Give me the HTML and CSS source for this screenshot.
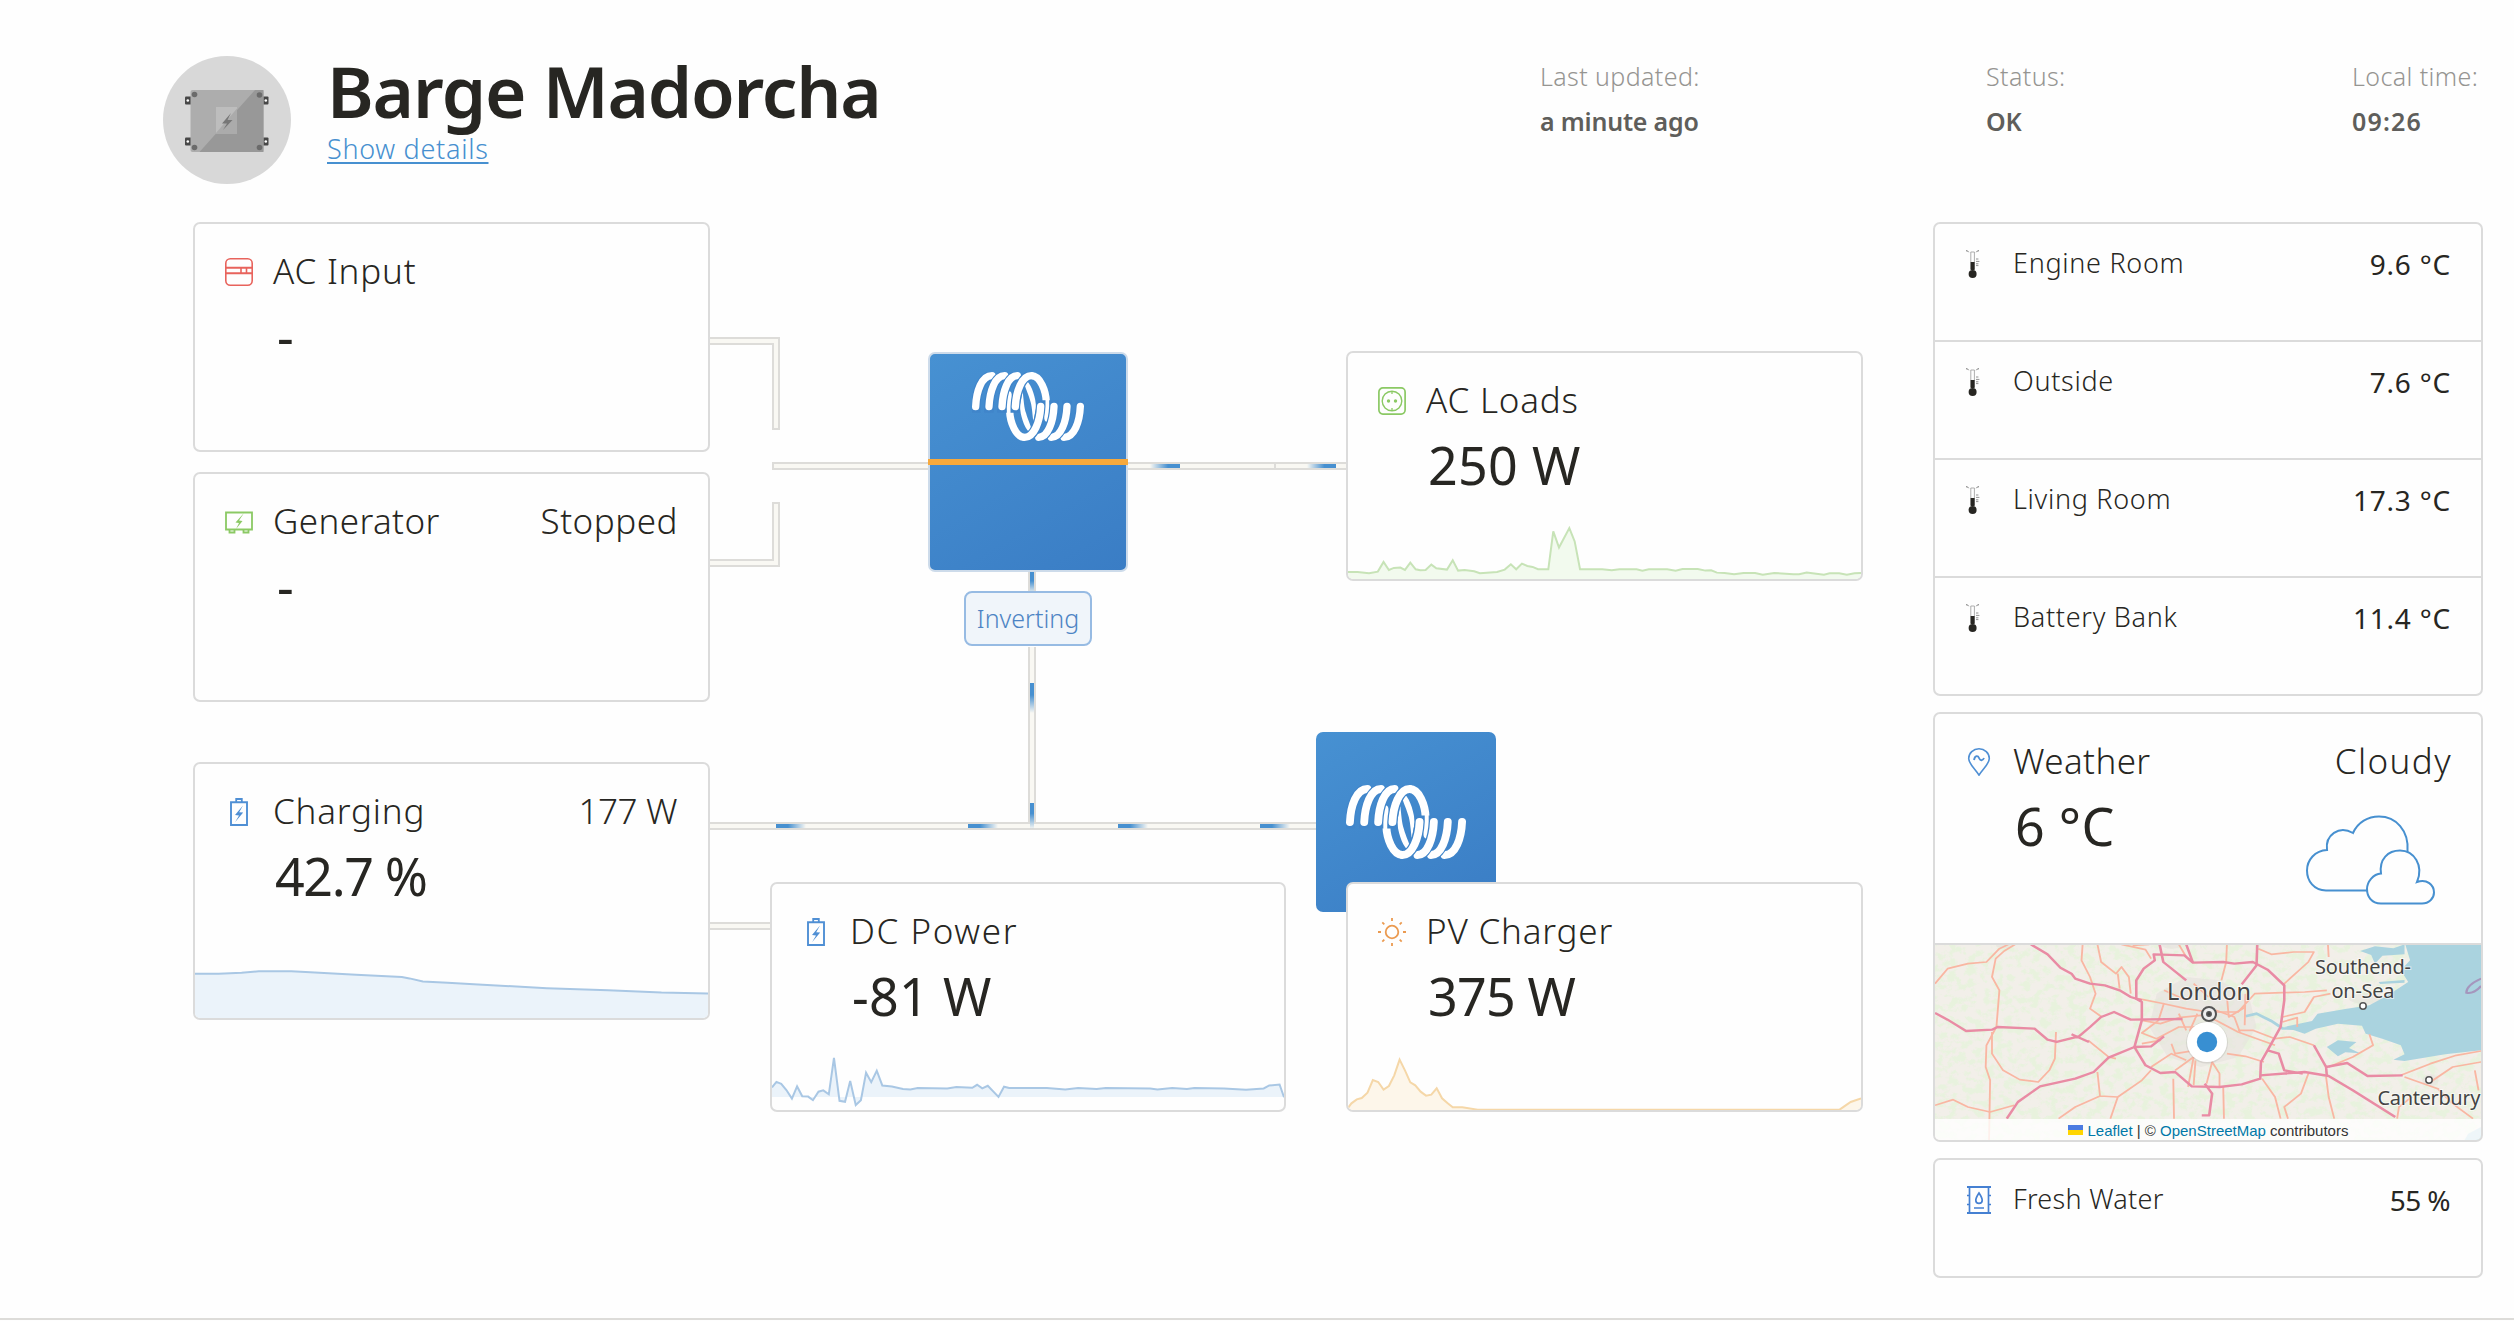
FILE: index.html
```
<!DOCTYPE html>
<html lang="en">

<head>
    <meta charset="utf-8">
    <title>Barge Madorcha</title>
    <link rel="stylesheet" href="styles.css">
</head>

<body>
    <!-- shared icons -->
    <svg class="sprite">
        <symbol id="logo" viewBox="0 0 336 207">
            <g fill="none" stroke-linecap="round">
                <path class="coil" d="M158 196 C131 196 114 150 113 116 C113 96 110 84 108 68"/>
                <path class="coil" d="M178 11 C205 11 222 57 223 91 C223 111 226 123 228 139"/>
                <path class="coil-back" d="M164 26 C181 40 191 82 193 104 Q189 122 184 148 C181 126 180 100 174 84 C168 62 158 44 158 36Z"/>
                <path class="coil-back" d="M172 181 C155 167 145 125 143 103 Q147 85 152 59 C155 81 156 107 162 123 C168 145 178 163 178 171Z"/>
                <path class="coil-gap" d="M11 122 V104 C13 58 29 11 62 11"/>
                <path class="coil" d="M11 104 C13 58 29 11 60 11"/>
                <path class="coil-gap" d="M51 122 V104 C53 58 69 11 100 11"/>
                <path class="coil" d="M51 104 C53 58 69 11 98 11"/>
                <path class="coil-gap" d="M90 122 V104 C92 58 108 11 138 11"/>
                <path class="coil" d="M90 104 C92 58 108 11 136 11"/>
                <path class="coil-gap" d="M130 122 V104 C132 58 150 11 178 11"/>
                <path class="coil" d="M130 104 C132 58 150 11 178 11"/>
                <path class="coil-gap" d="M325 85 V103 C323 149 307 196 274 196"/>
                <path class="coil" d="M325 103 C323 149 307 196 276 196"/>
                <path class="coil-gap" d="M285 85 V103 C283 149 267 196 236 196"/>
                <path class="coil" d="M285 103 C283 149 267 196 238 196"/>
                <path class="coil-gap" d="M246 85 V103 C244 149 228 196 198 196"/>
                <path class="coil" d="M246 103 C244 149 228 196 200 196"/>
                <path class="coil-gap" d="M206 85 V103 C204 149 186 196 158 196"/>
                <path class="coil" d="M206 103 C204 149 186 196 158 196"/>
            </g>
        </symbol>
        <symbol id="battery" viewBox="0 0 28 28">
            <path d="M6 4.2h16v22.8H6z" fill="none" stroke="currentColor" stroke-width="1.9"/>
            <path d="M11.2 4V1h5.6v3" fill="none" stroke="currentColor" stroke-width="1.8"/>
            <path d="M18 7.5l-8 9.6 4 .3-3.8 6.6 8-9.4-4-.4z" fill="currentColor"/>
        </symbol>
        <symbol id="thermo" viewBox="0 0 28 28">
            <path d="M5.8 2V19h3.6V2z" fill="#fff" stroke="#999" stroke-width=".8"/>
            <path d="M5.6 12h4v8h-4z" fill="#272622"/>
            <circle cx="7.6" cy="24" r="4" fill="#272622"/>
            <path d="M1 .8h1.4l1.2 1.4M14 .8h-1.4l-1.2 1.4" fill="none" stroke="#555" stroke-width=".8"/>
            <path d="M11 9h2.4M11 11.4h3.4M11 13.8h2.4M11 15.6h2.4" stroke="#777" stroke-width=".8"/>
        </symbol>
    </svg>

    <header class="header">
        <svg class="avatar" viewBox="0 0 128 128">
            <circle cx="64" cy="64" r="64" fill="#d8d8d8"/>
            <g fill="#474747">
                <rect x="22" y="40.5" width="7" height="8" rx="1"/>
                <rect x="22" y="81.5" width="7" height="8" rx="1"/>
                <rect x="98.5" y="40.5" width="7" height="8" rx="1"/>
                <rect x="98.5" y="81.5" width="7" height="8" rx="1"/>
            </g>
            <g fill="#fff">
                <circle cx="24.8" cy="44.5" r="1.3"/>
                <circle cx="24.8" cy="85.5" r="1.3"/>
                <circle cx="102.8" cy="44.5" r="1.3"/>
                <circle cx="102.8" cy="85.5" r="1.3"/>
            </g>
            <rect x="27.5" y="34" width="73" height="62" rx="2" fill="#adadad"/>
            <path d="M92 34h8.500v62H36.500z" fill="#989898"/>
            <rect x="53" y="51" width="21" height="27" fill="#bdbdbd"/>
            <path d="M74 52.500V78H53v-1z" fill="#ababab"/>
            <path d="M68 57l-9 10.500h5L60 74l9.500-10h-5z" fill="#777"/>
            <g fill="#6b6b6b">
                <circle cx="31.500" cy="38.500" r="2.800"/>
                <circle cx="96.500" cy="39" r="2.800"/>
                <circle cx="31.500" cy="91.500" r="2.800"/>
                <circle cx="96.500" cy="91.500" r="2.800"/>
            </g>
        </svg>
        <div class="title">
            <h1>Barge Madorcha</h1>
            <a href="#">Show details</a>
        </div>
        <dl class="stats">
            <div class="stat">
                <dt>Last updated:</dt>
                <dd>a minute ago</dd>
            </div>
            <div class="stat">
                <dt>Status:</dt>
                <dd>OK</dd>
            </div>
            <div class="stat">
                <dt>Local time:</dt>
                <dd class="clock">09:26</dd>
            </div>
        </dl>
    </header>

    <main class="main">
        <section class="diagram">
            <!-- wires -->
            <svg class="wires" viewBox="0 0 1670 900">
                <defs>
                    <linearGradient id="flow-r">
                        <stop offset="0" stop-color="#4790d0" stop-opacity="0"/>
                        <stop offset=".6" stop-color="#4790d0"/>
                    </linearGradient>
                    <linearGradient id="flow-l" x1="1" x2="0">
                        <stop offset="0" stop-color="#4790d0" stop-opacity="0"/>
                        <stop offset=".6" stop-color="#4790d0"/>
                    </linearGradient>
                    <linearGradient id="flow-u" x1="0" x2="0" y1="1" y2="0">
                        <stop offset="0" stop-color="#4790d0" stop-opacity="0"/>
                        <stop offset=".6" stop-color="#4790d0"/>
                    </linearGradient>
                </defs>
                <g class="wire">
                    <path d="M515 116H586V207H580V122H515"/>
                    <path d="M515 344H586V281H580V338H515"/>
                    <path d="M736 241H580V247H736"/>
                    <path d="M934 241H1155V247H934"/>
                    <path d="M1082 241v6"/>
                    <path d="M515 601H1125V607H515"/>
                    <path d="M515 701H580V707H515"/>
                    <path d="M836 349V370H842V349M836 425V602M842 425V602"/>
                    <path class="inner" d="M839 425V605"/>
                </g>
                <rect x="957" y="242" width="30" height="4" fill="url(#flow-r)"/>
                <rect x="1114" y="242" width="29" height="4" fill="url(#flow-r)"/>
                <rect x="583" y="602" width="30" height="4" fill="url(#flow-l)"/>
                <rect x="775" y="602" width="30" height="4" fill="url(#flow-l)"/>
                <rect x="925" y="602" width="30" height="4" fill="url(#flow-l)"/>
                <rect x="1067" y="602" width="30" height="4" fill="url(#flow-l)"/>
                <rect x="837" y="350" width="4" height="22" fill="url(#flow-u)"/>
                <rect x="837" y="461" width="4" height="30" fill="url(#flow-u)"/>
                <rect x="837" y="581" width="4" height="26" fill="url(#flow-u)"/>
            </svg>

            <article class="card ac-input">
                <div class="card-head">
                    <svg class="icon red" viewBox="0 0 28 28" fill="none" stroke="currentColor" stroke-width="1.6">
                        <rect x=".8" y=".8" width="26.400" height="26.400" rx="4.500"/>
                        <path d="M1 9.700h26M1 15.300h26" stroke-width="2"/>
                        <path d="M16 10v5M21.500 10v5"/>
                    </svg>
                    <h2>AC Input</h2>
                </div>
                <p class="value none">-</p>
            </article>

            <article class="card generator">
                <div class="card-head">
                    <svg class="icon green" viewBox="0 0 28 28" fill="none" stroke="currentColor" stroke-width="1.8">
                        <path d="M1 4.500h26v17H1z"/>
                        <path d="M4.500 22v2.500h5V22M18.500 22v2.500h5V22"/>
                        <path d="M19 5l-8.500 9.500 3.500.5-3 6 6.500-8-3.500-.5z" fill="currentColor" stroke="none"/>
                    </svg>
                    <h2 class="snug">Generator</h2>
                    <span class="state">Stopped</span>
                </div>
                <p class="value none">-</p>
            </article>

            <article class="card charging">
                <div class="card-head">
                    <svg class="icon blue"><use href="#battery"/></svg>
                    <h2>Charging</h2>
                    <span class="state watts">177 W</span>
                </div>
                <p class="value percent">42.7 %</p>
                <svg class="chart blue" viewBox="38 690 1344 146" preserveAspectRatio="none">
                    <path class="area" d="M38 704H100L160 701 205 697H290L340 700 460 707 580 714 600 718 635 727 700 731 780 736 960 747 1120 753 1260 760 1382 763V836H38z"/>
                    <path class="line" d="M38 704H100L160 701 205 697H290L340 700 460 707 580 714 600 718 635 727 700 731 780 736 960 747 1120 753 1260 760 1382 763"/>
                </svg>
            </article>

            <div class="unit inverter">
                <svg class="logo"><use href="#logo"/></svg>
            </div>
            <span class="badge">Inverting</span>

            <article class="card ac-loads">
                <div class="card-head">
                    <svg class="icon green" viewBox="0 0 28 28" fill="none" stroke="currentColor" stroke-width="1.700">
                        <rect x=".9" y=".9" width="26.200" height="26.200" rx="4"/>
                        <circle cx="14" cy="14" r="9.800" stroke-width="1.400"/>
                        <path d="M14 4v3M14 21v3" stroke-width="1.300"/>
                        <circle cx="10.500" cy="14" r="1.700" fill="currentColor" stroke="none"/>
                        <circle cx="17.500" cy="14" r="1.700" fill="currentColor" stroke="none"/>
                    </svg>
                    <h2>AC Loads</h2>
                </div>
                <p class="value">250 W</p>
                <svg class="chart green" viewBox="125 588 1342 161" preserveAspectRatio="none">
                    <path class="area" d="M125 728H150L180 732 203 727 218 698 232 722 245 716 262 715 274 722 288 700 302 720 314 723 328 722 343 706 356 717 384 721 399 693 413 724 430 722 455 726 470 732 515 728 535 721 551 705 565 720 580 703 594 710 608 713 622 720H649L662 607 677 655 704 597 718 637 732 720H790L815 723 835 720H880L895 724 912 720H960L982 724 1000 719H1040L1060 724 1075 723 1090 730 1110 731 1135 735 1160 731H1190L1210 736 1240 731 1290 735 1305 735 1325 730 1350 733 1370 736 1385 732H1410L1430 736 1450 732 1467 731V749H125z"/>
                    <path class="line" d="M125 728H150L180 732 203 727 218 698 232 722 245 716 262 715 274 722 288 700 302 720 314 723 328 722 343 706 356 717 384 721 399 693 413 724 430 722 455 726 470 732 515 728 535 721 551 705 565 720 580 703 594 710 608 713 622 720H649L662 607 677 655 704 597 718 637 732 720H790L815 723 835 720H880L895 724 912 720H960L982 724 1000 719H1040L1060 724 1075 723 1090 730 1110 731 1135 735 1160 731H1190L1210 736 1240 731 1290 735 1305 735 1325 730 1350 733 1370 736 1385 732H1410L1430 736 1450 732 1467 731"/>
                </svg>
            </article>

            <article class="card dc-power">
                <div class="card-head">
                    <svg class="icon blue"><use href="#battery"/></svg>
                    <h2 class="wide">DC Power</h2>
                </div>
                <p class="value">-81 W</p>
                <svg class="chart blue" viewBox="85 586 1388 165" preserveAspectRatio="none">
                    <path class="area" d="M85 682L97 665 110 671 124 690 139 716 153 679 167 709 183 710 196 721 211 695 224 691 239 703 253 592 268 723 283 726 297 662 312 736 326 721 340 637 354 666 369 631 384 676 410 679 440 687 460 688 480 684 560 685 585 681 628 683 641 674 655 685 670 677 699 711 714 680 728 684 830 684 880 688 915 684 965 687 990 684 1110 685 1130 688 1170 684 1210 687 1230 684 1310 685 1370 689 1418 685 1433 676 1461 673 1473 710V711H85z"/>
                    <path class="line" d="M85 682L97 665 110 671 124 690 139 716 153 679 167 709 183 710 196 721 211 695 224 691 239 703 253 592 268 723 283 726 297 662 312 736 326 721 340 637 354 666 369 631 384 676 410 679 440 687 460 688 480 684 560 685 585 681 628 683 641 674 655 685 670 677 699 711 714 680 728 684 830 684 880 688 915 684 965 687 990 684 1110 685 1130 688 1170 684 1210 687 1230 684 1310 685 1370 689 1418 685 1433 676 1461 673 1473 712"/>
                </svg>
            </article>

            <div class="unit solar">
                <svg class="logo"><use href="#logo"/></svg>
            </div>

            <article class="card pv-charger">
                <div class="card-head">
                    <svg class="icon orange" viewBox="0 0 28 28" fill="none" stroke="currentColor" stroke-width="1.800">
                        <circle cx="14" cy="14" r="6.300"/>
                        <path d="M14 0v3M14 25v3M0 14h3M25 14h3M4.300 4.300l2 2M21.700 21.700l2 2M23.700 4.300l-2 2M6.300 21.700l-2 2"/>
                    </svg>
                    <h2>PV Charger</h2>
                </div>
                <p class="value tight">375 W</p>
                <svg class="chart orange" viewBox="151 1040 1342 162" preserveAspectRatio="none">
                    <path class="area" d="M151 1196L160 1182 174 1170 187 1166 202 1150 216 1112 230 1118 244 1141 258 1130 272 1098 286 1051 300 1083 314 1119 327 1128 341 1147 355 1159 369 1156 383 1137 397 1167 411 1181 425 1194 450 1194 490 1201H1437L1452 1189 1466 1178 1493 1167V1202H151z"/>
                    <path class="line" d="M151 1196L160 1182 174 1170 187 1166 202 1150 216 1112 230 1118 244 1141 258 1130 272 1098 286 1051 300 1083 314 1119 327 1128 341 1147 355 1159 369 1156 383 1137 397 1167 411 1181 425 1194 450 1194 490 1201H1437L1452 1189 1466 1178 1493 1167"/>
                </svg>
            </article>
        </section>

        <aside class="sidebar">
            <ul class="panel">
                <li class="row">
                    <svg class="icon"><use href="#thermo"/></svg>
                    <span class="name">Engine Room</span>
                    <span class="reading">9.6 °C</span>
                </li>
                <li class="row">
                    <svg class="icon"><use href="#thermo"/></svg>
                    <span class="name">Outside</span>
                    <span class="reading">7.6 °C</span>
                </li>
                <li class="row">
                    <svg class="icon"><use href="#thermo"/></svg>
                    <span class="name">Living Room</span>
                    <span class="reading">17.3 °C</span>
                </li>
                <li class="row">
                    <svg class="icon"><use href="#thermo"/></svg>
                    <span class="name">Battery Bank</span>
                    <span class="reading">11.4 °C</span>
                </li>
            </ul>

            <div class="panel weather">
                <div class="forecast">
                    <div class="card-head">
                        <svg class="icon blue" viewBox="0 0 28 28" fill="none" stroke="currentColor" stroke-width="1.600">
                            <path d="M14 27.200C11 22 3.700 16 3.700 10.500a10.300 9.700 0 0 1 20.600 0C24.300 16 17 22 14 27.200z"/>
                            <path d="M9 12c1-5 4-4.500 5-2s3.500 3.500 5 0" stroke-width="1.900"/>
                        </svg>
                        <h2 class="snug">Weather</h2>
                        <span class="state sky">Cloudy</span>
                    </div>
                    <div class="weather-now">
                        <p class="value">6 °C</p>
                        <svg class="clouds" viewBox="0 0 130 90" fill="#fefefe" stroke="#4790d0" stroke-width="2">
                            <path d="M62 75.500H20C8 75.500 1 66 1 55.500S9 35.500 21 35C19 20 33 10 47 18 52 7 62 1.500 73 1.500c17 0 30 14 28.500 34.500V75.500z"/>
                            <path d="M75 88.500C65 88.500 61 81 61 74s6-15 14-15.500C73 44 82 35.500 94 35.500c14 0 24 15 17 31.500 10-3.500 17 3 17 10.500 0 6-5 11-12 11z"/>
                        </svg>
                    </div>
                </div>
                <div class="map">
                    <svg class="map-tiles" viewBox="0 0 546 196">
                        <defs>
                            <filter id="terrain" x="0" y="0" width="1" height="1">
                                <feTurbulence type="fractalNoise" baseFrequency=".04 .045" numOctaves="4" seed="7"/>
                                <feColorMatrix values="0 0 0 0 .78  0 0 0 0 .90  0 0 0 0 .70  0 6 0 0 -2.800"/>
                            </filter>
                        </defs>
                        <g transform="scale(.37 .3333) translate(-41 -44)">
                            <path d="M41 42H1517V634H41z" fill="#f2efe9"/>
                            <path d="M41 42H1517V634H41z" filter="url(#terrain)" opacity=".75"/>
                            <g fill="#e6e2de" opacity=".6">
                                <path d="M640 190l80-50 90 10 80 50 20 90-50 90-100 30-90-30-50-90z"/>
                                <ellipse cx="228" cy="46" rx="22" ry="8"/>
                                <ellipse cx="680" cy="45" rx="26" ry="10"/>
                                <ellipse cx="1210" cy="205" rx="50" ry="16"/>
                                <ellipse cx="1380" cy="450" rx="22" ry="18"/>
                            </g>
                            <g fill="#aad3df">
                                <path d="M1312 42H1517V360L1420 372 1310 392 1280 388 1310 372 1300 345 1250 325 1205 310 1195 286 1130 280 1070 295 1040 310 985 290 1060 272 1075 250 1150 236 1215 225 1265 195 1320 155 1300 120 1325 90z"/>
                                <path d="M1190 62l40-14 50 6 30-12v30l-60 4-20 24-10-26z"/>
                                <path d="M1100 350l30-20 50 5-20 18 30 16-40-3-20 12z"/>
                                <path d="M1517 590l-35 20-10 20h45z"/>
                                <path d="M1240 155l70-6v8l-66 4z"/>
                            </g>
                            <path d="M880 258l30-8 40 22 30 22 60 2" fill="none" stroke="#aad3df" stroke-width="8"/>
                            <path d="M1517 145q-40 20-40 42 20 5 40-20" fill="none" stroke="#a596bd" stroke-width="6"/>
                            <g class="road">
                                <path d="M41 160L75 115 130 100 180 95 215 55 240 42M258 42L228 62 205 85 195 140 215 180 207 290 180 345 178 410 190 450 187 630"/>
                                <path d="M195 305L195 370 225 420 270 448 320 455 350 420 365 385 368 305M41 525L90 508 130 530 190 545 255 525"/>
                                <path d="M440 42L437 90 460 140 475 190 460 235 492 260M480 42L490 95 530 130 545 110 565 140 570 190M535 130L540 175"/>
                                <path d="M545 42L610 58 625 85M575 45L620 42M700 42L720 80M830 42L828 95 815 150M915 55L950 72 1010 65 1065 65 1050 95 1000 145 980 165M1103 42L1105 80"/>
                                <path d="M590 205L650 218 720 235 780 245 860 245 905 190 980 187 1040 185 1100 180M880 190L878 285M600 270L650 280 700 262 760 255 800 270 860 305 960 345"/>
                                <path d="M980 260L1040 245 1065 200 1110 190M980 275L1020 262 1020 290M1105 410L1170 380 1225 345 1215 312M860 300L900 300 960 325 1000 320 1065 345"/>
                                <path d="M660 218L645 270 600 308 650 330 600 340M640 325L700 290 760 290M680 340L690 370 745 360 775 330M625 410L680 370 720 390"/>
                                <path d="M690 420L740 380 725 470M745 390L740 465M775 460L790 395 810 430 810 470M820 470L822 565M685 445L687 565M830 370L880 378 930 395"/>
                                <path d="M455 330L510 380 530 385M480 425L487 497 535 500 600 450 625 420M487 497L420 530 375 565M535 500L515 565"/>
                                <path d="M925 445L960 500 975 565M1050 430L1030 490 985 530 995 565M1098 440L1105 500 1120 565M1300 435L1380 400 1450 375 1517 362M1380 455L1440 410 1517 395M1310 440L1400 475 1440 520 1495 565M1500 420L1510 480M1290 565L1295 530 1330 500"/>
                                <path d="M750 250L730 300 770 350M800 240L850 260 865 305M700 250L720 300M830 200L835 260 880 230M780 200L740 160M660 180L720 210"/>
                            </g>
                            <g class="motorway">
                                <path d="M300 42L345 72 380 112 410 130 420 145 460 160 500 165 540 180 570 200 600 210"/>
                                <path d="M41 248L75 268 125 302 195 298 210 290 310 295 345 328 370 335 430 318 460 290 490 260 525 245 570 268 710 266M410 312L457 335"/>
                                <path d="M585 205L585 150 605 115 635 90 632 72 715 75 738 97 820 95 850 100 900 95 940 118 985 165 985 210 975 290 940 360 922 395 920 445 870 462 810 470 735 468 690 425 650 428 610 405 580 350 600 270 600 215z"/>
                                <path d="M580 350L510 382 470 425 420 445 325 468 265 515 235 565M580 350L625 348 660 318"/>
                                <path d="M648 42L658 95 720 150M720 42L738 97M912 42L910 105 870 162"/>
                                <path d="M770 460L790 490 782 555 762 555M920 435L1040 425 1105 437 1170 480 1285 560M940 360L970 370 985 420 1035 430"/>
                                <path d="M1065 345L1098 410 1155 398 1210 437 1305 435M1098 410L1100 437"/>
                            </g>
                        </g>
                        <g class="places">
                            <text x="274" y="55" font-size="23" textLength="84" lengthAdjust="spacingAndGlyphs">London</text>
                            <text x="428" y="29" font-size="20" textLength="96">Southend-</text>
                            <text x="428" y="53" font-size="20" textLength="63">on-Sea</text>
                            <text x="494" y="160" font-size="20" textLength="103">Canterbury</text>
                        </g>
                        <g fill="#fff" stroke="#555" stroke-width="1.500">
                            <circle cx="274" cy="69" r="7" fill="#eee" stroke-width="2"/>
                            <circle cx="274" cy="69" r="2.200" fill="#444"/>
                            <circle cx="428" cy="61" r="3.200"/>
                            <circle cx="494" cy="135" r="3.200"/>
                        </g>
                        <circle cx="272" cy="97.500" r="21" fill="#888" opacity=".2"/>
                        <circle cx="272" cy="97" r="20" fill="#fff"/>
                        <circle cx="272" cy="97" r="10.200" fill="#388fd2"/>
                    </svg>
                    <div class="attribution">
                        <svg class="flag" viewBox="0 0 15 10"><path d="M0 0h15v5H0z" fill="#4c7be1"/><path d="M0 5h15v5H0z" fill="#ffd500"/></svg>
                        <span><a href="#">Leaflet</a> | © <a href="#">OpenStreetMap</a> contributors</span>
                    </div>
                </div>
            </div>

            <div class="panel">
                <div class="row water">
                    <svg class="icon water-icon" viewBox="0 0 28 28" fill="none" stroke="currentColor" stroke-width="1.700">
                        <path d="M2 1h24M2 27h24" stroke-width="2"/>
                        <path d="M4.500 1v26M23.500 1v26M2 9.500h2.500M2 18.500h2.500M23.500 9.500H26M23.500 18.500H26M9 22h10"/>
                        <path d="M14 7c-2 3-3.200 5-3.200 7.200a3.200 3.200 0 0 0 6.400 0C17.200 12 16 10 14 7z"/>
                    </svg>
                    <span class="name">Fresh Water</span>
                    <span class="reading">55 %</span>
                </div>
            </div>
        </aside>
    </main>
</body>

</html>
```
FILE: styles.css
```
* {
    box-sizing: border-box;
}

body {
    margin: 0;
    height: 1320px;
    background-color: #fefefe;
    border-bottom: 2px solid #dddcd9;
    color: #272622;
    font-family: "Noto Sans", "Open Sans", sans-serif;
}

h1, h2, p, ul, dl, dd {
    margin: 0;
    padding: 0;
    font-weight: 300;
}

svg {
    display: block;
}

.sprite {
    position: absolute;
    width: 0;
    height: 0;
}

/* Header */

.header {
    display: flex;
    height: 222px;
    padding: 56px 33px 0 163px;
}

.avatar {
    width: 128px;
    height: 128px;
}

.title {
    margin-left: 36px;
    width: 1213px;
}

h1 {
    height: 74px;
    font-size: 71px;
    line-height: 70px;
    letter-spacing: -1.2px;
    font-weight: 600;
}

.title a {
    color: #4790d0;
    font-size: 27px;
    line-height: 38px;
    letter-spacing: .7px;
    font-weight: 350;
    text-underline-offset: 3px;
    text-decoration-thickness: 2px;
}

.stats {
    display: grid;
    grid-template-columns: 446px 366px auto;
    font-size: 25px;
    line-height: 45px;
}

.stat {
    margin-top: -2px;
    white-space: nowrap;
}

dt {
    color: #969592;
    font-weight: 300;
    letter-spacing: .4px;
}

dd {
    color: #5f5e5b;
    font-weight: 600;
    letter-spacing: -.2px;
}

.clock {
    letter-spacing: 1.2px;
}

/* Layout */

.main {
    display: flex;
    gap: 70px;
    padding-left: 193px;
}

.diagram {
    position: relative;
    width: 1670px;
    height: 900px;
}

.wires {
    width: 1670px;
    height: 900px;
}

.wire path {
    fill: #f9f8f3;
    stroke: #dddcd9;
    stroke-width: 2;
}

.wire .inner {
    stroke: #f9f8f3;
    stroke-width: 4;
}

/* Cards */

.card {
    position: absolute;
    display: flex;
    flex-direction: column;
    width: 517px;
    height: 230px;
    background: #fefefe;
    border: 2px solid #dbdbdb;
    border-radius: 7px;
    overflow: hidden;
}

.ac-input { left: 0; top: 0; }
.generator { left: 0; top: 250px; }
.charging { left: 0; top: 540px; height: 258px; }
.ac-loads { left: 1153px; top: 129px; }
.dc-power { left: 577px; top: 660px; width: 516px; }
.pv-charger { left: 1153px; top: 660px; }

.card-head {
    display: flex;
    align-items: center;
    padding: 27px 30px 0;
}

.icon {
    width: 28px;
    height: 28px;
    margin-right: 20px;
    flex: none;
}

.card-head .icon {
    margin-top: 1px;
}

.red { color: #e8635c; }
.green { color: #8bc964; }
.blue { color: #4f8fd4; }
.orange { color: #eb9a50; }

h2, .state {
    font-size: 35px;
    line-height: 40px;
    font-weight: 300;
    letter-spacing: .8px;
}

h2.snug {
    letter-spacing: .4px;
}

h2.wide {
    letter-spacing: 1.6px;
}

.state {
    margin-left: auto;
    letter-spacing: .5px;
}

.state.watts {
    letter-spacing: -.4px;
    margin-right: 1px;
}

.state.sky {
    letter-spacing: 1.4px;
    margin-right: -1px;
}

.value {
    margin: 13px 0 0 80px;
    font-size: 52px;
    line-height: 64px;
    font-weight: 450;
    letter-spacing: .3px;
}

.value.none {
    margin-left: 82px;
}

.value.percent {
    letter-spacing: -1.4px;
}

.value.tight {
    letter-spacing: -.8px;
}

.chart {
    width: 100%;
    height: 54px;
    margin-top: auto;
    flex: none;
}

.charging .chart {
    height: 49px;
}

.line {
    fill: none;
    stroke-width: 2;
    vector-effect: non-scaling-stroke;
}

.chart.blue .line { stroke: #a9c7e4; }
.chart.blue .area { fill: #ebf3fa; }
.chart.green .line { stroke: #c7e3b7; }
.chart.green .area { fill: #f2faee; }
.chart.orange .line { stroke: #f5d7a8; }
.chart.orange .area { fill: #fdf6ea; }

/* Inverter and solar charger */

.unit {
    position: absolute;
    display: flex;
    justify-content: center;
    align-items: center;
    background: linear-gradient(150deg, #4791d2, #3a7dc5);
    border-radius: 7px;
}

.inverter {
    left: 735px;
    top: 130px;
    width: 200px;
    height: 220px;
    align-items: flex-start;
    padding-top: 18px;
    border: 2px solid #cddbea;
}

.inverter::after {
    content: "";
    position: absolute;
    left: -2px;
    right: -2px;
    top: 105px;
    height: 6px;
    background: #f7a93c;
}

.inverter .logo {
    width: 112px;
    height: 69px;
}

.solar {
    left: 1123px;
    top: 510px;
    width: 180px;
    height: 180px;
}

.solar .logo {
    width: 120px;
    height: 74px;
}

.coil {
    stroke: #fff;
    stroke-width: 22;
}

.coil-back {
    fill: #fff;
}

.coil-gap {
    stroke: #4085ca;
    stroke-width: 29;
    stroke-linecap: butt;
}

.badge {
    position: absolute;
    left: 771px;
    top: 369px;
    width: 128px;
    height: 55px;
    background: #f0f5fa;
    border: 2px solid #97bbe3;
    border-radius: 8px;
    color: #4d84c4;
    font-size: 25px;
    line-height: 50px;
    text-align: center;
    font-weight: 350;
}

/* Sidebar */

.sidebar {
    display: flex;
    flex-direction: column;
    width: 550px;
    gap: 16px;
}

.panel {
    border: 2px solid #dbdbdb;
    border-radius: 7px;
    overflow: hidden;
}

.row {
    display: flex;
    height: 118px;
    padding: 26px 30px 0;
    border-bottom: 2px solid #dbdbdb;
}

.row:last-child {
    height: 116px;
    border-bottom: 0;
}

.name, .reading {
    font-size: 27px;
    line-height: 24px;
    margin-top: 1px;
    font-weight: 300;
    letter-spacing: .7px;
}

.reading {
    margin-left: auto;
    margin-top: 2px;
    font-size: 28px;
    font-weight: 450;
    letter-spacing: .8px;
}

.water .name {
    letter-spacing: .3px;
}

.water .reading {
    letter-spacing: -.6px;
    margin-right: 1px;
}

.water-icon {
    color: #4580d2;
}

.weather {
    height: 430px;
}

.forecast {
    height: 231px;
    border-bottom: 2px solid #dbdbdb;
}

.weather-now {
    display: flex;
    justify-content: space-between;
    padding-right: 45px;
}

.clouds {
    width: 130px;
    height: 90px;
    margin-top: 34px;
}

.map {
    height: 196px;
}

.map-tiles {
    width: 546px;
    height: 196px;
}

.road {
    fill: none;
    stroke: #f9b6a2;
    stroke-width: 5;
    stroke-linejoin: round;
}

.motorway {
    fill: none;
    stroke: #e98ba4;
    stroke-width: 7;
    stroke-linejoin: round;
}

.places text {
    fill: #444;
    stroke: #fff;
    stroke-opacity: .6;
    stroke-width: 2;
    paint-order: stroke;
    text-anchor: middle;
    font-weight: 400;
}

.attribution {
    position: relative;
    display: flex;
    align-items: center;
    justify-content: center;
    gap: 5px;
    height: 22px;
    margin-top: -22px;
    background: rgba(255, 255, 255, .8);
    color: #333;
    font: 15px "Liberation Sans", sans-serif;
}

.attribution a {
    color: #0078a8;
    text-decoration: none;
}

.flag {
    width: 15px;
    height: 10px;
}
```
